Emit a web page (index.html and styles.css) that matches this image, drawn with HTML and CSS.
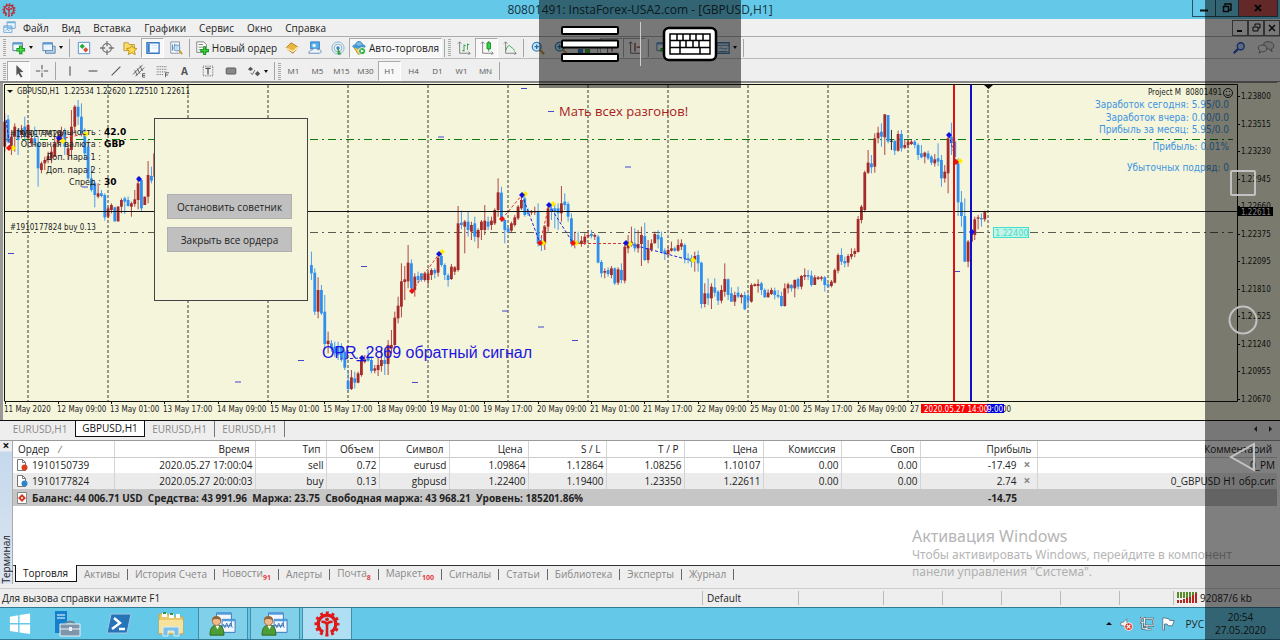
FILE: index.html
```html
<!DOCTYPE html>
<html lang="ru">
<head>
<meta charset="utf-8">
<title>80801491: InstaForex-USA2.com - [GBPUSD,H1]</title>
<link rel="stylesheet" href="styles.css">
</head>
<body>
<svg class="defs" aria-hidden="true">
  <symbol id="logo" viewBox="0 0 28 28"><g fill="none" stroke="currentColor"><path d="M10 22.600A9.500 9.500 0 1 1 18 22.600" stroke-width="3.400"/><circle cx="14" cy="14" r="12" stroke-width="3" stroke-dasharray="3.140 3.140" stroke-dashoffset="1.570"/><path d="M14 12v15M8 11.500c4 0 6 1 6 4M20 11.500c-4 0-6 1-6 4" stroke-width="2.800"/></g><circle cx="14" cy="9" r="2" fill="currentColor"/></symbol>
  <symbol id="windows" viewBox="0 0 16 16"><path d="M5 1h10v8H5zM1 6h10v8H1z" fill="#eef6fc" stroke="#5b9bd0"/><path d="M5 2h10M1 7.500h10" stroke="#6fb2e4" stroke-width="1.500"/><path d="M3 12l2-2 2 2 2-2" fill="none" stroke="#5b9bd0"/></symbol>
  <symbol id="newchart" viewBox="0 0 16 16"><path d="M1 2h11v9H1z" fill="#eef6fc" stroke="#4d7ca8"/><path d="M1 3h11" stroke="#5b9bd0" stroke-width="2"/><path d="M10 5v10M5 10h10" stroke="#159a22" stroke-width="4"/><path d="M10 6v8M6 10h8" stroke="#4edb45" stroke-width="1.500"/></symbol>
  <symbol id="profiles" viewBox="0 0 16 16"><path d="M4 6h11v8H4z" fill="#bcd4e8" stroke="#4d7ca8"/><path d="M1 2h11v9H1z" fill="#e8f3fb" stroke="#4d7ca8"/><path d="M1 3h11" stroke="#5b9bd0" stroke-width="2"/></symbol>
  <symbol id="market" viewBox="0 0 16 16"><path d="M1.500 1.500h13v13h-13z" fill="#f7fbff" stroke="#4c88c0"/><path d="M6 3l3 3-3 3-3-3z" fill="#23a935"/><path d="M10 7l3 3-3 3-3-3z" fill="#df4f36"/></symbol>
  <symbol id="target" viewBox="0 0 16 16"><circle cx="8" cy="8" r="5" fill="none" stroke="#777" stroke-width="1.500"/><path d="M8 0v6M8 10v6M0 8h6M10 8h6" stroke="#777" stroke-width="1.500"/></symbol>
  <symbol id="favorite" viewBox="0 0 16 16"><path d="M1 2h5l1 2h6v7H1z" fill="#f8dc72" stroke="#bd9529"/><path d="M10 5l2 3 4 .5-3 3 1 4-4-2-4 2 1-4-3-3 4-.5z" fill="#ffd84e" stroke="#b68b17"/></symbol>
  <symbol id="terminal" viewBox="0 0 16 16"><path d="M1 2h14v12H1z" fill="#f8fbff" stroke="#3979bf" stroke-width="1.500"/><path d="M3 3v10" stroke="#317ccb" stroke-width="2.500"/><path d="M6 5h7M6 8h7" stroke="#cfdae5"/></symbol>
  <symbol id="tester" viewBox="0 0 16 16"><path d="M2 1h10v13H2z" fill="#f6f7fb" stroke="#8191a1"/><path d="M4 11V4M6.500 10V3M9 10V5" stroke="#4882bc"/><circle cx="9" cy="8" r="3.500" fill="#c9e6f7aa" stroke="#6090b9"/><path d="M12 11l3 4" stroke="#d09b31" stroke-width="2"/></symbol>
  <symbol id="order" viewBox="0 0 16 16"><path d="M2 1h8l3 3v9H2z" fill="#fff" stroke="#777"/><path d="M4 4h5M4 7h5M4 10h3" stroke="#777"/><path d="M11 6v10M6 11h10" stroke="#159a22" stroke-width="3.500"/><path d="M11 7v8M7 11h8" stroke="#4edb45"/></symbol>
  <symbol id="book" viewBox="0 0 16 16"><path d="M1 8l6-6 8 5-6 7z" fill="#e9b544" stroke="#a87618"/><path d="M1 8l8 4 6-5" fill="none" stroke="#fff2bb" stroke-width="1.500"/></symbol>
  <symbol id="cloud" viewBox="0 0 16 16"><path d="M3 1h10v8H3z" fill="#57aee8" stroke="#2a7bc2"/><circle cx="7" cy="5" r="2" fill="#e7f5ff"/><path d="M1 14c0-4 3-3 4-4 3-3 6-1 6 0 5-1 5 4 2 4z" fill="#e9f4fc" stroke="#6489b0"/></symbol>
  <symbol id="signal" viewBox="0 0 16 16"><g fill="none" stroke="#79afca"><circle cx="8" cy="8" r="7"/><circle cx="8" cy="8" r="4.500"/></g><circle cx="8" cy="8" r="2" fill="#3989d1"/><path d="M8 9l3 6H8z" fill="#35a344" stroke="#35a344"/></symbol>
  <symbol id="auto" viewBox="0 0 16 16"><path d="M2 7h12l-5 8H7z" fill="#f2cc50" stroke="#b58c24"/><ellipse cx="8" cy="6" rx="7.500" ry="3" fill="#4b9cd5"/><path d="M4 5c0-6 8-6 8 0-2 1.500-6 1.500-8 0z" fill="#72bce8" stroke="#3b7eb2"/><circle cx="11.500" cy="11.500" r="4" fill="#25a838" stroke="#fff"/><path d="M10 9.500l4 2-4 2z" fill="#fff"/></symbol>
  <symbol id="bars" viewBox="0 0 16 16"><path d="M3 1v13h12M1 3l2-2 2 2M13 12l2 2-2 2" fill="none" stroke="#777"/><path d="M8 4v8M8 5h2M6 11h2M12 3v7M12 4h2" stroke="#2a9b3b"/></symbol>
  <symbol id="candles" viewBox="0 0 16 16"><path d="M3 1v13h12M1 3l2-2 2 2M13 12l2 2-2 2" fill="none" stroke="#777"/><path d="M10 0v12" stroke="#168827"/><path d="M8 2h4v7H8z" fill="#2cd740" stroke="#168827"/></symbol>
  <symbol id="line" viewBox="0 0 16 16"><path d="M3 1v13h12M1 3l2-2 2 2M13 12l2 2-2 2" fill="none" stroke="#777"/><path d="M3 11c3-8 5-6 6-4 1 1 3 1 4 4" fill="none" stroke="#2a9b3b"/></symbol>
  <symbol id="zoomin" viewBox="0 0 16 16"><circle cx="6.500" cy="6.500" r="5" fill="#c5e5f9" stroke="#3c83bf" stroke-width="1.500"/><path d="M4 6.500h5M6.500 4v5" stroke="#236fae" stroke-width="1.500"/><path d="M10 10l5 5" stroke="#c39b42" stroke-width="2.500"/></symbol>
  <symbol id="tile" viewBox="0 0 16 16"><path d="M1 1h6v6H1zM9 9h6v6H9z" fill="#489b3d"/><path d="M9 1h6v6H9zM1 9h6v6H1z" fill="#397fc2"/></symbol>
  <symbol id="shift" viewBox="0 0 16 16"><path d="M3 1v13h12M1 3l2-2 2 2" fill="none" stroke="#555"/><path d="M8 2v10M10 7h5" stroke="#904040" stroke-width="1.500"/></symbol>
  <symbol id="template" viewBox="0 0 16 16"><path d="M1 2h14v12H1z" fill="#d7e7f4" stroke="#4b7caa" stroke-width="1.500"/><path d="M1 5h14M3 9c3-3 5 2 10-1M3 12h10" fill="none" stroke="#4b7caa"/></symbol>
  <symbol id="cursor" viewBox="0 0 16 16"><path d="M5 1l8 8-4 .5 3 5-2 1-3-5-2 3z" fill="#555"/></symbol>
  <symbol id="cross" viewBox="0 0 16 16"><path d="M8 1v5M8 10v5M1 8h5M10 8h5M7.500 8h1" stroke="#555" stroke-width="1.200"/></symbol>
  <symbol id="vline" viewBox="0 0 16 16"><path d="M8 2.500v11" stroke="#555" stroke-width="1.300"/></symbol>
  <symbol id="hline" viewBox="0 0 16 16"><path d="M3 8h10" stroke="#555" stroke-width="1.300"/></symbol>
  <symbol id="trend" viewBox="0 0 16 16"><path d="M3 13L13 3" stroke="#555" stroke-width="1.300"/></symbol>
  <symbol id="channel" viewBox="0 0 16 16"><path d="M1 12L12 1M4 14L14 4M3 7l3 6M6 5l3 6M9 2l3 6M12 11h3M12 13h3M12 15h3M12 11v4" stroke="#555"/></symbol>
  <symbol id="fibo" viewBox="0 0 16 16"><path d="M2 3h12M2 6h12M2 9h12M2 12h8" stroke="#555" stroke-dasharray="1 1"/><path d="M12 15v-5h4M12 12.500h3" fill="none" stroke="#555"/></symbol>
  <symbol id="label" viewBox="0 0 16 16"><path d="M2.500 2.500h11v11h-11z" fill="none" stroke="#555" stroke-dasharray="1 1"/><path d="M5 5h6M8 5v7" stroke="#555" stroke-width="1.500"/></symbol>
  <symbol id="rect" viewBox="0 0 16 16"><rect x="2.500" y="4.500" width="11" height="7" rx="1" fill="#888" stroke="#555"/></symbol>
  <symbol id="arrows" viewBox="0 0 16 16"><path d="M4 3l3 3-3 2-3-2zM12 8l3 3-3 3-3-3z" fill="#555"/><path d="M4 10l2 2 3-5" stroke="#555" fill="none"/></symbol>
  <symbol id="doc" viewBox="0 0 12 12"><path d="M1.500.5h5l3 3v8h-8z" fill="#fff" stroke="#777"/><path d="M6.500.5v3h3" fill="none" stroke="#777"/><circle cx="8.500" cy="8.500" r="3" fill="currentColor"/></symbol>
  <symbol id="advisor" viewBox="0 0 30 28"><path d="M8 2h16v14H8zM14 9h14v14H14z" fill="#f2f8fd" stroke="#3873b8"/><path d="M8 3h16M14 10h14" stroke="#4f9cde" stroke-width="2"/><path d="M15 14l2 4 2-5 2 5 2-5 2 5" fill="none" stroke="#3873b8"/><path d="M1 26c0-8 3-11 8-11s7 4 7 11z" fill="#4d9c36" stroke="#28681e"/><circle cx="8" cy="11" r="4.500" fill="#efb98b" stroke="#a36b42"/><path d="M3 10c0-6 10-6 10 0-4-2-7-2-10 0" fill="#93653a"/><path d="M7 16l2 4 2-4" fill="#fff"/></symbol>
</svg>
<div class="app">
  <header class="titlebar">
    <svg class="app-icon"><use href="#logo"/></svg>
    <h1>80801491: InstaForex-USA2.com - [GBPUSD,H1]</h1>
    <div class="win-buttons">
      <button aria-label="Свернуть"><svg viewBox="0 0 12 12"><path d="M2 8.500h8" stroke="#111" stroke-width="2"/></svg></button>
      <button aria-label="Восстановить"><svg viewBox="0 0 12 12"><path d="M4 3.500V2h6v6H8M2.500 4.500h5v5h-5z" fill="none" stroke="#111" stroke-width="1.500"/></svg></button>
      <button class="close" aria-label="Закрыть"><svg viewBox="0 0 12 12"><path d="M3 3l6 6M9 3L3 9" stroke="#111" stroke-width="2"/></svg></button>
    </div>
  </header>
  <nav class="menubar">
    <svg class="icon14"><use href="#windows"/></svg>
    <button>Файл</button><button>Вид</button><button>Вставка</button><button>Графики</button><button>Сервис</button><button>Окно</button><button>Справка</button>
    <div class="mdi-buttons">
      <button aria-label="Свернуть график"><svg viewBox="0 0 12 12"><path d="M3 9h5" stroke="#111" stroke-width="2"/></svg></button>
      <button aria-label="Восстановить график"><svg viewBox="0 0 12 12"><path d="M5 4V2h5v4H8M3 5h5v4H3z" fill="none" stroke="#111"/></svg></button>
      <button aria-label="Закрыть график"><svg viewBox="0 0 12 12"><path d="M3 3l6 6M9 3L3 9" stroke="#111" stroke-width="1.500"/></svg></button>
    </div>
  </nav>
  <div class="toolbar">
    <i class="grip"></i>
    <button class="drop" aria-label="Новый график"><svg><use href="#newchart"/></svg></button>
    <button class="drop" aria-label="Профили"><svg><use href="#profiles"/></svg></button>
    <i class="sep"></i>
    <button aria-label="Обзор рынка"><svg><use href="#market"/></svg></button>
    <button aria-label="Окно данных"><svg><use href="#target"/></svg></button>
    <button aria-label="Навигатор"><svg><use href="#favorite"/></svg></button>
    <button class="on" aria-label="Терминал"><svg><use href="#terminal"/></svg></button>
    <button aria-label="Тестер"><svg><use href="#tester"/></svg></button>
    <i class="sep"></i>
    <button class="wide order"><svg><use href="#order"/></svg>Новый ордер</button>
    <button aria-label="Редактор"><svg><use href="#book"/></svg></button>
    <button aria-label="Облако"><svg><use href="#cloud"/></svg></button>
    <button aria-label="Сигналы"><svg><use href="#signal"/></svg></button>
    <button class="wide on auto"><svg><use href="#auto"/></svg>Авто-торговля</button>
    <i class="sep"></i><i class="grip"></i>
    <button aria-label="Бары"><svg><use href="#bars"/></svg></button>
    <button class="on" aria-label="Свечи"><svg><use href="#candles"/></svg></button>
    <button aria-label="Линия"><svg><use href="#line"/></svg></button>
    <i class="sep"></i>
    <button aria-label="Увеличить"><svg><use href="#zoomin"/></svg></button>
    <button aria-label="Уменьшить"><svg><use href="#zoomin"/></svg></button>
    <button aria-label="Упорядочить"><svg><use href="#tile"/></svg></button>
    <i class="sep"></i>
    <button class="on" aria-label="Автопрокрутка"><svg><use href="#shift"/></svg></button>
    <button class="on" aria-label="Сдвиг"><svg><use href="#shift"/></svg></button>
    <i class="sep"></i>
    <button class="drop" aria-label="Индикаторы"><svg><use href="#newchart"/></svg></button>
    <button class="drop" aria-label="Периоды"><svg><use href="#target"/></svg></button>
    <button class="drop" aria-label="Шаблоны"><svg><use href="#template"/></svg></button>
    <i class="sep"></i>
    <div class="toolbar-end">
      <button aria-label="Поиск"><svg viewBox="0 0 16 16"><circle cx="10" cy="6" r="4" fill="#bcd4ff" stroke="#2456cf" stroke-width="1.500"/><path d="M7 9l-5 5" stroke="#2456cf" stroke-width="2.500"/></svg></button>
      <button aria-label="Чат"><svg class="chat" viewBox="0 0 20 16"><path d="M8 2c5-3 11 0 11 3s-2 4-3 4l1 3-4-3c-4 0-7-4-5-7z" fill="#ddd" stroke="#777"/><path d="M1 8c0-4 9-5 10 0 0 4-4 5-6 4l-3 2 1-3z" fill="#eee" stroke="#777"/></svg></button>
    </div>
  </div>
  <div class="toolbar">
    <i class="grip"></i>
    <button class="on" aria-label="Курсор"><svg><use href="#cursor"/></svg></button>
    <button aria-label="Перекрестие"><svg><use href="#cross"/></svg></button>
    <i class="sep"></i>
    <button aria-label="Вертикальная линия"><svg><use href="#vline"/></svg></button>
    <button aria-label="Горизонтальная линия"><svg><use href="#hline"/></svg></button>
    <button aria-label="Трендовая линия"><svg><use href="#trend"/></svg></button>
    <button aria-label="Канал"><svg><use href="#channel"/></svg></button>
    <button aria-label="Фибоначчи"><svg><use href="#fibo"/></svg></button>
    <button class="letter">A</button>
    <button aria-label="Метка"><svg><use href="#label"/></svg></button>
    <button aria-label="Прямоугольник"><svg><use href="#rect"/></svg></button>
    <button class="drop" aria-label="Стрелки"><svg><use href="#arrows"/></svg></button>
    <i class="sep"></i><i class="grip"></i>
    <div class="frames"><button>M1</button><button>M5</button><button>M15</button><button>M30</button><button class="on">H1</button><button>H4</button><button>D1</button><button>W1</button><button>MN</button></div>
    <i class="sep"></i>
  </div>

  <main class="chart">
    <svg id="chart" viewBox="0 82 1280 338" preserveAspectRatio="xMinYMin meet" role="img" aria-label="График GBPUSD,H1"></svg>
    <section class="panel">
      <button>Остановить советник</button>
      <button>Закрыть все ордера</button>
    </section>
  </main>

  <nav class="chart-tabs">
    <button>EURUSD,H1</button><button class="active">GBPUSD,H1</button><button>EURUSD,H1</button><button>EURUSD,H1</button>
    <span class="scroll"><i></i><i></i></span>
  </nav>

  <section class="terminal">
    <aside><button aria-label="Закрыть терминал">×</button><span>Терминал</span></aside>
    <div class="terminal-main">
      <div class="table-box">
        <table>
          <colgroup><col class="c101"><col class="c141"><col class="c71"><col class="c53"><col class="c70"><col class="c79"><col class="c78"><col class="c78"><col class="c79"><col class="c78"><col class="c79"><col class="c117"><col></colgroup>
          <thead><tr><th>Ордер <em>∕</em></th><th>Время</th><th>Тип</th><th>Объем</th><th>Символ</th><th>Цена</th><th>S / L</th><th>T / P</th><th>Цена</th><th>Комиссия</th><th>Своп</th><th>Прибыль</th><th>Комментарий</th></tr></thead>
          <tbody>
            <tr><td><svg class="sell"><use href="#doc"/></svg>1910150739</td><td>2020.05.27 17:00:04</td><td>sell</td><td>0.72</td><td>eurusd</td><td>1.09864</td><td>1.12864</td><td>1.08256</td><td>1.10107</td><td>0.00</td><td>0.00</td><td>-17.49<button aria-label="Закрыть ордер">×</button></td><td>0_PM</td></tr>
            <tr class="alt"><td><svg class="buy"><use href="#doc"/></svg>1910177824</td><td>2020.05.27 20:00:03</td><td>buy</td><td>0.13</td><td>gbpusd</td><td>1.22400</td><td>1.19400</td><td>1.23350</td><td>1.22611</td><td>0.00</td><td>0.00</td><td>2.74<button aria-label="Закрыть ордер">×</button></td><td>0_GBPUSD H1 обр.сиг</td></tr>
            <tr class="total"><td colspan="11"><svg viewBox="0 0 12 12"><path d="M1.500.5h9v11h-9z" fill="#fff" stroke="#888"/><path d="M6 2l4 4-4 4-4-4z" fill="#d33a24"/><circle cx="6" cy="6" r="1" fill="#fff"/></svg>Баланс: 44 006.71 USD&nbsp; Средства: 43 991.96&nbsp; Маржа: 23.75&nbsp; Свободная маржа: 43 968.21&nbsp; Уровень: 185201.86%</td><td>-14.75</td><td></td></tr>
          </tbody>
        </table>
      </div>
      <nav class="terminal-tabs">
        <button class="active">Торговля</button><button>Активы</button><button>История Счета</button><button>Новости<sub>91</sub></button><button>Алерты</button><button>Почта<sub>8</sub></button><button>Маркет<sub>100</sub></button><button>Сигналы</button><button>Статьи</button><button>Библиотека</button><button>Эксперты</button><button>Журнал</button>
      </nav>
    </div>
    <div class="watermark"><h2>Активация Windows</h2><p>Чтобы активировать Windows, перейдите в компонент<br>панели управления "Система".</p></div>
  </section>

  <footer class="status">
    <span class="help">Для вызова справки нажмите F1</span><span class="profile">Default</span><span class="w1"></span><span class="w2"></span><span class="w2"></span><span class="w2"></span><span class="w2"></span><span class="w3"></span>
    <span class="traffic"><svg viewBox="0 0 20 11"><path d="M0 3h20" stroke="#5b8a2a" stroke-width="6" stroke-dasharray="2 1"/><path d="M1 11V8M4 11V8M7 11V7M10 11V6M13 11V5M16 11V3M19 11V1" stroke="#b3261e" stroke-width="2"/></svg>92087/6 kb</span>
  </footer>
  <footer class="taskbar">
    <button aria-label="Пуск"><svg viewBox="0 0 24 24"><path d="M1 4l9-1.500V11H1zM11.500 2.300L23 .5V11H11.500zM1 12.500h9V21l-9-1.500zM11.500 12.500H23V23l-11.500-1.700z" fill="#fff"/></svg></button>
    <button aria-label="Диспетчер серверов"><svg viewBox="0 0 28 26"><path d="M2 0h12v22H2z" fill="#1581cd"/><path d="M4 4h8M4 7h8" stroke="#fff"/><path d="M13 13c0-3 8-3 8 0" fill="none" stroke="#6d8495" stroke-width="2"/><path d="M7 13h20v12H7z" fill="#7e96aa" stroke="#e9f2f8"/><path d="M7 18h20" stroke="#e9f2f8"/><path d="M16 16h3v4h-3z" fill="#eef"/></svg></button>
    <button aria-label="PowerShell"><svg viewBox="0 0 28 26"><path d="M6 3h20l-4 19H2z" fill="#2773b8" stroke="#9fc9e8"/><path d="M9 7l6 5-8 6M14 18h6" fill="none" stroke="#fff" stroke-width="2.500"/></svg></button>
    <button aria-label="Проводник"><svg viewBox="0 0 28 26"><path d="M2 3h9l2 3h13v17H2z" fill="#e9cb6c" stroke="#c9a848"/><path d="M5 2h5v4H5zM12 3h5v4h-5zM19 3h4v4h-4z" fill="#fff"/><path d="M6 2h3M13 3h3" stroke="#299849" stroke-width="2"/><path d="M2 9h24v13H2z" fill="#f6e29c"/><path d="M6 25v-9h16v9h-5v-5h-6v5z" fill="#79bfe8" stroke="#d8effb"/></svg></button>
    <button class="open" aria-label="Терминал 1"><svg><use href="#advisor"/></svg></button>
    <button class="open" aria-label="Терминал 2"><svg><use href="#advisor"/></svg></button>
    <button class="open current" aria-label="InstaForex"><svg><use href="#logo"/></svg></button>
    <div class="tray">
      <i class="up"></i>
      <svg viewBox="0 0 16 16"><path d="M2 6h3l4-4v11l-4-3H2z" fill="#eaf5fa" stroke="#68818c"/><circle cx="11" cy="11" r="4.500" fill="#d93b30" stroke="#fff"/><path d="M9 9l4 4M13 9l-4 4" stroke="#fff" stroke-width="1.500"/></svg>
      <svg viewBox="0 0 16 16"><path d="M5 2h10v8H5zM1 1h4v5H1zM3 6v7h5M8 10v4M6 14h7" fill="none" stroke="#37505c" stroke-width="2.500"/><path d="M5 2h10v8H5zM1 1h4v5H1zM3 6v7h5M8 10v4M6 14h7" fill="none" stroke="#fff"/></svg>
      <svg viewBox="0 0 16 16"><path d="M2 1h2l5 1 1 2h5l-2 6H8L7 8H4v7H2z" fill="#fff" stroke="#55707d"/></svg>
      <span>РУС</span>
      <time>20:54<br>27.05.2020</time>
    </div>
  </footer>

  <div class="remote-bar">
    <button aria-label="Меню"><svg class="burger" viewBox="0 0 60 38"><g fill="#fff" stroke="#000" stroke-width="2"><rect x="2" y="2" width="56" height="7" rx="1"/><rect x="2" y="15.500" width="56" height="7" rx="1"/><rect x="2" y="29" width="56" height="7" rx="1"/></g></svg></button>
    <button aria-label="Клавиатура"><svg class="keyboard" viewBox="0 0 56 36"><rect x="2" y="2" width="52" height="32" rx="5" fill="#fff" stroke="#000" stroke-width="2.500"/><path d="M8 8h40v20H8zM8 14.500h40M8 21.500h40M15 8v6.500M21 8v6.500M28 8v6.500M34 8v6.500M41 8v6.500M18 14.500v7M24 14.500v7M31 14.500v7M37 14.500v7M18 21.500V28M38 21.500V28" fill="none" stroke="#000" stroke-width="1.500"/></svg></button>
  </div>
  <div class="android-bar">
    <button aria-label="Обзор"><svg viewBox="0 0 32 32"><rect x="4" y="4" width="24" height="24" rx="1"/></svg></button>
    <button aria-label="Домой"><svg viewBox="0 0 32 32"><circle cx="16" cy="16" r="13.500"/></svg></button>
    <button aria-label="Назад"><svg viewBox="0 0 32 32"><path d="M27 3v26L4 16z"/></svg></button>
  </div>
</div>
<script src="chart.js"></script>
</body>
</html>
```
FILE: styles.css
```css
* { box-sizing: border-box; }
body { margin: 0; background: #eee; color: #222; font: 10px/14px "Open Sans", "Noto Sans", sans-serif; }
button { padding: 0; border: 0; background: none; color: inherit; font: inherit; white-space: nowrap; }
svg { display: block; flex: none; }
.defs { position: absolute; width: 0; height: 0; }
.app { position: relative; display: flex; flex-direction: column; min-height: 100vh; overflow: hidden; }

.titlebar { display: flex; align-items: center; height: 19px; padding: 0 2px; background: #64c9e8; color: #17323c; }
.app-icon { width: 14px; height: 14px; color: #b8323c; }
.titlebar h1 { flex: 1; margin: 0; padding-left: 72px; text-align: center; font: 12px/18px "Open Sans", "Noto Sans", sans-serif; }
.win-buttons { display: flex; align-self: flex-start; height: 17px; border: 1px solid #28505d; border-top: 0; }
.win-buttons button { display: grid; place-items: center; width: 23px; border-right: 1px solid #28505d; }
.win-buttons .close { width: 38px; border: 0; background: #c75050; }
.win-buttons svg, .mdi-buttons svg { width: 12px; height: 12px; }

.menubar { display: flex; align-items: center; gap: 13px; height: 18px; padding-left: 3px; border-bottom: 1px solid #aaa; background: #f0f0f0; }
.icon14 { width: 13px; height: 13px; margin-right: -6px; }
.mdi-buttons { display: flex; margin-left: auto; }
.mdi-buttons button { display: grid; place-items: center; width: 16px; height: 16px; border: 1px solid #666; background: #f0f0f0; }

.toolbar { display: flex; align-items: center; height: 22px; padding-left: 2px; border-bottom: 1px solid #bbb; background: #efefef; }
.toolbar + .toolbar { height: 23px; padding-top: 2px; border-color: #888; font-size: 8px; color: #555; }
.toolbar button { display: flex; align-items: center; justify-content: center; flex: none; width: 23px; height: 20px; }
.toolbar button.on { border: 1px solid #c6c6c6; border-color: #aaa #fff #fff #aaa; background: #f8f8f8; }
.toolbar svg { width: 14px; height: 14px; }
.toolbar .chat { width: 18px; }
.toolbar .drop { width: 30px; gap: 3px; }
.toolbar .drop::after { content: ""; border: 2px solid transparent; border-top: 3px solid #111; border-bottom: 0; }
.toolbar .wide { gap: 3px; width: auto; }
.toolbar .order { width: 88px; }
.toolbar .auto { width: 93px; }
.toolbar .letter { font: bold 10px/14px "Open Sans", sans-serif; }
.toolbar .frames { display: flex; gap: 1px; }
.grip { width: 3px; height: 17px; margin: 0 1px; background: repeating-linear-gradient(#aaa 0 1px, #eee 1px 2px); }
.sep { width: 1px; height: 18px; margin: 0 2px; background: #a5a5a5; }
.toolbar-end { display: flex; gap: 4px; margin-left: auto; padding-right: 3px; }

.chart { position: relative; border-bottom: 1px solid #111; background: #f5f5dc; }
.chart > svg { width: 100%; height: auto; }
.chart text { font-family: "DejaVu Sans Condensed", "DejaVu Sans", sans-serif; font-stretch: condensed; fill: #222; }
.chart .t8 { font-size: 8px; }
.chart .t9 { font-size: 9px; }
.chart .t10 { font-size: 10px; }
.chart .t13 { font-size: 13px; }
.chart .opr { font-family: "Liberation Sans", sans-serif; font-size: 16px; fill: #1c14e0; }
.chart .bold { font-family: "DejaVu Sans", sans-serif; font-stretch: normal; font-weight: bold; fill: #000; }
.chart .end { text-anchor: end; }
.chart .info { fill: #3d94e0; }
.chart .slogan { font-family: "Open Sans", sans-serif; font-stretch: normal; fill: #a82020; }
.chart .white { fill: #fff; }
.chart .aqua { fill: #40e0d0; }
.panel { position: absolute; left: 154px; top: 36px; display: flex; flex-direction: column; align-items: flex-start; gap: 8px; width: 154px; height: 183px; padding: 75px 0 0 12px; border: 1px solid #444; background: #f5f5dc; }
.panel button { width: 125px; height: 25px; border: 1px solid #b0b0b0; background: #c0c0c0; color: #222; }

.chart-tabs { display: flex; height: 19px; padding: 0 0 3px 5px; color: #888; }
.chart-tabs button { width: 70px; border-right: 1px solid #777; }
.chart-tabs button:first-child { border: 0; }
.chart-tabs .active { margin-top: -1px; border: 1px solid #111; border-top: 0; background: #fff; color: #111; }
.scroll { display: flex; gap: 12px; align-items: center; margin-left: auto; padding-right: 8px; }
.scroll i { border: 3px solid transparent; border-right-color: #333; border-left: 0; }
.scroll i + i { border-left: 3px solid #333; border-right: 0; }

.terminal { position: relative; flex: 1; display: flex; min-height: 144px; margin-bottom: 4px; border-top: 1px solid #999; }
.terminal aside { display: flex; flex-direction: column; justify-content: space-between; align-items: center; width: 13px; border-right: 1px solid #aaa; background: linear-gradient(#eee 0 10px, #c5d8ec 11px, #dce5f0); }
.terminal aside button { font: bold 12px/9px "Open Sans", sans-serif; color: #111; }
.terminal aside span { writing-mode: vertical-rl; transform: rotate(180deg); line-height: 12px; }
.terminal-main { flex: 1; display: flex; flex-direction: column; min-width: 0; }
.table-box { flex: 1; padding-right: 3px; background: #fff; }
table { width: 100%; border-collapse: collapse; table-layout: fixed; }
.c101 { width: 101px; } .c141 { width: 141px; } .c71 { width: 71px; } .c53 { width: 53px; } .c70 { width: 70px; }
.c78 { width: 78px; } .c79 { width: 79px; } .c117 { width: 117px; }
th, td { height: 16px; padding: 0 2px; border-right: 1px solid #d4d4d4; text-align: right; font-weight: normal; line-height: 14px; white-space: nowrap; }
th { padding-right: 5px; border-bottom: 1px solid #ccc; }
th:last-child, td:last-child { border-right: 0; }
th:first-child, td:first-child { padding-left: 5px; text-align: left; }
th em { padding-left: 6px; color: #777; }
td:first-child { padding-left: 3px; }
td svg { display: inline-block; width: 12px; height: 12px; margin-right: 4px; vertical-align: -2px; }
.sell { color: #d9411e; }
.buy { color: #2b83c8; }
td button { width: 11px; margin: 0 2px 0 5px; color: #888; font: bold 12px/10px "Open Sans", sans-serif; }
.alt td { background: #ebebeb; }
.total td { height: 17px; border: 0; background: #c6c6c6; font-weight: bold; }
.total td:nth-child(2) { padding-right: 20px; }
.terminal-tabs { display: flex; align-items: flex-start; height: 19px; border-top: 1px solid #333; color: #888; }
.terminal-tabs button { position: relative; height: 15px; padding: 0 8px 0 7px; }
.terminal-tabs button:not(.active)::after { content: ""; position: absolute; right: 0; top: 3px; height: 11px; border-right: 1px solid #666; }
.terminal-tabs .active { height: 17px; margin: -1px 0 0 2px; border: 1px solid #111; border-top: 0; background: #fff; color: #111; }
.terminal-tabs sub { font: bold 7px/7px "Open Sans", sans-serif; color: #e33b44; }
.watermark { position: absolute; left: 912px; top: 85px; color: #999; opacity: .72; }
.watermark h2 { margin: 0; font: 16px/20px "Noto Sans", sans-serif; }
.watermark p { margin: 0; font: 12px/17px "Noto Sans", sans-serif; white-space: nowrap; }

.status { display: flex; align-items: center; height: 19px; padding-bottom: 1px; border-top: 1px solid #ccc; }
.status span { height: 14px; border-left: 1px solid #bbb; }
.status .help { flex: 1; padding-left: 2px; border: 0; }
.status .profile { width: 96px; padding-left: 4px; }
.status .w1 { width: 85px; }
.status .w2 { width: 59px; }
.status .w3 { width: 54px; }
.status .traffic { display: flex; align-items: center; gap: 3px; width: 107px; padding-left: 3px; }
.status .traffic svg { width: 20px; height: 11px; }

.taskbar { display: flex; gap: 2px; height: 33px; border: 1px solid #327b95; border-width: 1px 0; background: #64c9e8; }
.taskbar button { display: grid; place-items: center; width: 50px; }
.taskbar button:first-child { width: 40px; }
.taskbar svg { width: 28px; height: 26px; }
.taskbar button:first-child svg { width: 24px; height: 22px; }
.taskbar .open { border: 1px solid #438da8; border-width: 0 1px; background: #80d0ea; }
.taskbar .current { background: #afdff2; color: #e01818; }
.taskbar .tray { display: flex; align-items: center; gap: 7px; margin-left: auto; padding-right: 14px; }
.taskbar .tray svg { width: 14px; height: 14px; }
.up { border: 3px solid transparent; border-bottom: 3px solid #111; border-top: 0; }
.tray time { padding-left: 6px; line-height: 13px; text-align: center; }
.tray span { padding-left: 4px; }
.tray time { padding-left: 4px; }

.remote-bar { position: absolute; top: 0; left: 539px; display: flex; align-items: center; justify-content: space-between; width: 202px; height: 88px; padding: 0 23px 0 21px; background: rgba(0, 0, 0, .5); }
.remote-bar button + button { display: flex; align-items: center; height: 44px; padding-left: 21px; border-left: 1px solid #ccc; }
.remote-bar .burger { width: 60px; height: 38px; }
.remote-bar .keyboard { width: 56px; height: 36px; }
.android-bar { position: absolute; top: 0; right: 0; bottom: 0; display: flex; flex-direction: column; justify-content: center; align-items: center; gap: 105px; width: 75px; background: rgba(0, 0, 0, .5); }
.android-bar svg { width: 32px; height: 32px; fill: none; stroke: #c2c2c2; stroke-width: 2; }
```
FILE: chart.js
```js
const svg = document.getElementById('chart');
const NS = 'http://www.w3.org/2000/svg';
function add(tag, attrs, text) {
  const el = document.createElementNS(NS, tag);
  for (const k in attrs) el.setAttribute(k, attrs[k]);
  if (text) el.textContent = text;
  svg.appendChild(el);
}
const label = (x, y, cls, text) => add('text', { x, y, class: cls }, text);
const path = (d, stroke, extra) => add('path', Object.assign({ d, stroke, fill: 'none' }, extra));

// Frame, day separators, level lines
add('rect', { x: 0, y: 82, width: 1280, height: 338, fill: '#f5f5dc' });
add('rect', { x: 0, y: 82, width: 3, height: 338, fill: '#999' });
path('M0 82.500H1277', '#888');
for (let x = 28; x < 1000; x += 80) path(`M${x} 85V401`, '#3c3c32', { 'stroke-dasharray': '3 2', 'stroke-width': 1 });
path('M4 139.500H1233', '#0b7a0b', { 'stroke-dasharray': '8 4 2 4' });
path('M4 232.500H1233', '#5b5b50', { 'stroke-dasharray': '8 4 2 4' });

// Bars: colour, high, low, body top, body bottom in thirds of a pixel; 10 units per bar
const series = [
  { from: 0, top: 0, bars: 'r340 455 365 440,b345 430 358 425,r390 465 410 440,r370 455 380 410,b385 465 390 420,r375 415 390 405,b350 420 380 410,r370 420 375 415,r400 440 415 430,b380 440 415 430,b410 560 430 505,r485 520 490 510,r470 510 480 490,r455 490 468 480,r440 490 455 475,r400 470 430 470,r390 440 410 430,r380 420 395 410,b385 465 395 440,r430 480 445 465,r330 475 380 450,r315 400 320 380,b300 375 320 350,b310 410 350 400,b385 480 405 460,b420 540 440 535,b500 575 535 570,b545 622 550 585,r550 595 580 590,b570 592 580 588,b580 662 585 652,r620 655 625 650,r610 640 615 630,b620 665 622 664,r618 665 620 664,r595 640 600 620,b590 642 595 605,b590 620 600 618,r605 650 610 620,r570 620 598 612,r530 628 550 600,b538 635 540 625,r590 615 590 615,r483 610 525 590,b500 550 528 542,r455 545 460 530' },
  { from: 92, top: 570, bars: 'b185 270 225 250,b235 375 248 365,r262 385 300 365,b285 375 300 370,b315 475 365 462,r425 490 452 462' },
  { from: 98, top: 540, bars: 'b480 515 490 505,b485 530 500 520,b485 540 500 525,b490 545 500 535,b510 570 515 563,b570 635 603 627,r570 630 592 627,b575 625 595 608,r575 610 580 608,r535 590 540 585,r525 550 538 545,b510 545 530 542,b530 580 540 573,r555 580 565 572,r530 588 555 570,r510 575 540 558,b505 585 540 552,r480 585 495 552,r450 520 495 505,r395 505 413 495,r350 430 377 415,r250 412 304 380,r258 360 298 306,r195 325 248 304,b238 340 250 325,r280 350 290 330,b275 310 288 300,b280 305 280 300,r275 305 280 300,r275 315 280 300,r265 300 270 285,b265 295 270 280,r230 290 233 278,b222 260 228 255,b250 300 255 285,b280 320 286 300,r252 300 260 297,r258 285 262 275,r78 275 130 270,b92 148 128 135,r120 220 125 140,b95 170 125 150,r125 180 135 155,b110 185 130 170,r145 205 150 172,r120 180 125 150,r75 165 122 150,b110 150 125 140,r110 150 122 135,r85 135 90 130,r-5 110 37 90,b20 125 38 120,b115 190 120 150,b135 160 145 157,r125 158 130 152,r105 140 112 135,r75 120 80 115,r45 90 60 85,b45 110 55 105,b85 108 92 102,r90 105 95 98,r80 105 93 97,b70 200 95 190,b165 213 185 195,r135 210 140 190,r80 155 85 140,b75 120 85 95,b70 145 85 95,b70 150 85 100,r18 125 70 100,b40 90 65 75,b65 125 72 110,b100 200 115 190,r155 205 185 195,b155 190 185 190,r168 200 182 192,r160 195 170 188,r150 175 165 170,b150 175 162 168,r160 180 165 170,b165 250 170 248,b240 292 246 280,r265 295 273 278,b262 290 270 282,r258 295 265 285,b262 315 265 310,r262 315 268 308,b250 310 270 300' },
  { from: 186, top: 540, bars: 'r190 310 200 302,r165 220 190 205,r140 200 185 192,b145 215 190 205,r150 218 192 205,r140 258 165 192,b128 243 168 240,r180 250 205 240,r178 215 190 208,r155 190 162 190,b150 205 165 178,b155 220 172 215,b205 240 212 222,r200 230 210 222,r185 215 205 212,b200 215 205 212,r178 215 195 212,r178 210 190 200,b190 250 195 235,b220 250 235 240,b225 262 235 245,r215 275 228 240,b212 275 225 250,b245 385 248 372,r310 382 340 372,b295 375 340 355,r310 387 320 355,b295 350 322 338,b330 375 335 362,r315 370 330 362,r250 350 297 335,b295 360 298 345,b322 365 340 365,r335 378 345 365,b320 355 338 350,r340 370 345 352,b335 390 345 388,b340 375 347 362,r310 368 315 365,r310 320 313 318,r298 338 312 318,b305 345 310 330,b325 353 330 352,r328 352 338 352,r323 345 330 342,b323 358 332 345,b330 355 345 350,b335 380 348 378,r310 380 325 378,r308 340 313 325,b312 335 315 325,r298 352 300 325,b292 328 297 320,r285 328 288 320,r265 300 285 290,b270 300 285 290,b272 320 287 315,r285 315 292 315,r288 300 292 297,r288 302 292 296,b288 335 292 315,b308 320 313 320,r300 322 305 318,r265 310 270 308,r220 280 225 272,b205 255 225 245,b230 262 243 250,r222 260 228 248,r205 238 222 230,r205 232 213 222,r108 218 117 216,r75 130 80 120,r-28 97 -23 90' },
  { from: 259, top: 240, bars: 'r210 282 248 278,b225 280 250 262,r160 278 175 260,r140 190 158 175,b130 200 155 170,r102 225 103 172,b105 190 105 185,k150 210 182 185,b178 225 183 212,r152 215 162 212,b150 215 162 205,r180 207 195 203,r180 205 185 195,r178 195 185 192,b180 205 185 195,b190 240 195 225,b195 235 220 232,r215 250 218 230,b212 240 220 235,b225 255 230 248,r222 260 238 250,b190 258 235 245,b225 320 240 295,r255 308 275 295,r165 340 175 280,b128 225 170 190,b175 240 185 230,b235 408 250 367,b333 440 367 408,b355 545 408 545,r480 562 485 545,r440 490 450 485,r410 480 418 465,r405 448 412 416,b400 440 414 418,r392 425 395 418' }
];
const colours = { r: '#a52a2a', b: '#2f8fee', k: '#111' };
for (const s of series) s.bars.split(',').forEach((bar, i) => {
  const [hi, lo, top, bottom] = bar.slice(1).split(' ').map(n => (Number(n) + s.top) / 3);
  const x = (14 + 10 * (s.from + i)) / 3;
  const fill = colours[bar[0]];
  add('rect', { x: x - 0.4, y: hi, width: 1, height: lo - hi, fill, opacity: 0.85 });
  add('rect', { x: x - 1.3, y: top, width: 2.8, height: Math.max(bottom - top, 1), fill });
});

// Trades
for (const [a, b, c] of [['M412 291', 'L439 254', '#d33'], ['M502 219', 'L522 195', '#d33'], ['M522 195', 'L540 243', '#22c'], ['M540 243', 'L549 205', '#d33'], ['M549 205', 'L573 243', '#22c'], ['M573 243.500', 'L626 243.500', '#d33'], ['M626 243', 'L693 261', '#22c'], ['M340 359', 'L362 358', '#22c'], ['M6 120', 'L10 148', '#22c'], ['M60 139', 'L84 134', '#d33'], ['M949 135', 'L956 161', '#22c']]) path(a + b, c, { 'stroke-dasharray': '3 2' });
function mark(x, y, fill) { add('path', { d: `M${x} ${y - 3}l3 3-3 3-3-3z`, fill }); }
for (const [x, y] of [[442, 252], [525, 194], [543, 243], [553, 204], [576, 243], [630, 244], [693, 260], [63, 141], [13, 148], [86, 134], [960, 161]]) mark(x, y, '#ffee00');
for (const [x, y] of [[439, 254], [522, 195], [549, 205], [626, 243], [362, 358], [59, 138], [139, 179], [949, 135]]) mark(x, y, '#1111dd');
for (const [x, y] of [[412, 291], [502, 219], [540, 243], [573, 243], [9, 148], [956, 162]]) mark(x, y, '#ee1111');
for (const [x, y] of [[524, 88.5], [551, 111.5], [441, 137], [628, 167], [11, 253.5], [301, 360.5], [238, 382], [364, 266.5], [505, 311], [541, 327], [575, 340.5], [415, 382.5], [85, 187], [141, 88], [957, 271.5]]) path(`M${x - 3} ${y}h6`, '#4646cc');

path('M4 211.500H1237', '#111');
path('M954 85V401', '#e01010', { 'stroke-width': 2 });
path('M971 85V401', '#1010cc', { 'stroke-width': 2 });
mark(972, 232, '#1111dd');
path('M4.500 401V84.500H1237.500V401.500H4.500', '#111');
add('path', { d: 'M984 85h9l-4.500 4z', fill: '#111' });
add('path', { d: 'M7 90h6l-3 3z', fill: '#111' });

label(17, 94, 't8', 'GBPUSD,H1\u00a0 1.22534 1.22620 1.22510 1.22611');
label(10, 230, 't8', '#1910177824 buy 0.13');
label(10, 137, 't8', '#1910177824');
[['Чувствительность :', 135, '42.0'], ['Основная валюта :', 147, 'GBP'], ['Доп. пара 1 :', 160, ''], ['Доп. пара 2 :', 173, ''], ['Спред :', 185, '30']].forEach(([t, y, v]) => {
  label(101, y, 't9 end', t);
  if (v) label(104, y, 't9 bold', v);
});
label(559, 116, 't13 slogan', 'Мать всех разгонов!');
label(322, 358, 'opr', 'OPR_2869 обратный сигнал');
label(1181, 95, 't8 end', 'Project M');
label(1222, 95, 't8 end', '80801491');
add('circle', { cx: 1228, cy: 93, r: 4.5, fill: 'none', stroke: '#222' });
path('M1226 91.500h1M1229 91.500h1M1225.500 94c1 2 4 2 5 0', '#222');
[['Заработок сегодня: 5.95/0.0', 108], ['Заработок вчера: 0.00/0.0', 121], ['Прибыль за месяц: 5.95/0.0', 133], ['Прибыль: 0.01%', 150], ['Убыточных подряд: 0', 171]].forEach(([t, y]) => label(1229, y, 't10 info end', t));
add('rect', { x: 993.5, y: 227.5, width: 35, height: 10, fill: '#c8f3e4', stroke: '#40e0d0' });
label(995, 236, 't9 aqua', '1.22400');

// Price scale
['1.23800', '1.23515', '1.23230', '1.22945', '1.22660', '1.22375', '1.22095', '1.21810', '1.21525', '1.21240', '1.20955', '1.20670'].forEach((t, i) => {
  const y = Math.round(96 + i * 27.5);
  path(`M1237 ${y}.500h3`, '#111');
  label(1241, y + 3, 't8', t);
});
add('rect', { x: 1238, y: 207, width: 35, height: 9, fill: '#000' });
label(1241, 215, 't8 white', '1.22611');

// Time scale
['11 May 2020', '12 May 09:00', '13 May 01:00', '13 May 17:00', '14 May 09:00', '15 May 01:00', '15 May 17:00', '18 May 09:00', '19 May 01:00', '19 May 17:00', '20 May 09:00', '21 May 01:00', '21 May 17:00', '22 May 09:00', '25 May 01:00', '25 May 17:00', '26 May 09:00', '27'].forEach((t, i) => {
  const x = Math.round(3.500 + i * 53.333);
  path(`M${x + 1}.500 401v3`, '#111');
  label(x, 412, 't8', t);
});
label(1002, 412, 't8', '00');
add('rect', { x: 985, y: 404, width: 19, height: 9, fill: '#00d' });
label(987, 412, 't8 white', '9:00');
add('rect', { x: 921, y: 404, width: 66, height: 9, fill: '#f00' });
label(924, 412, 't8 white', '2020.05.27 14:00');
```
